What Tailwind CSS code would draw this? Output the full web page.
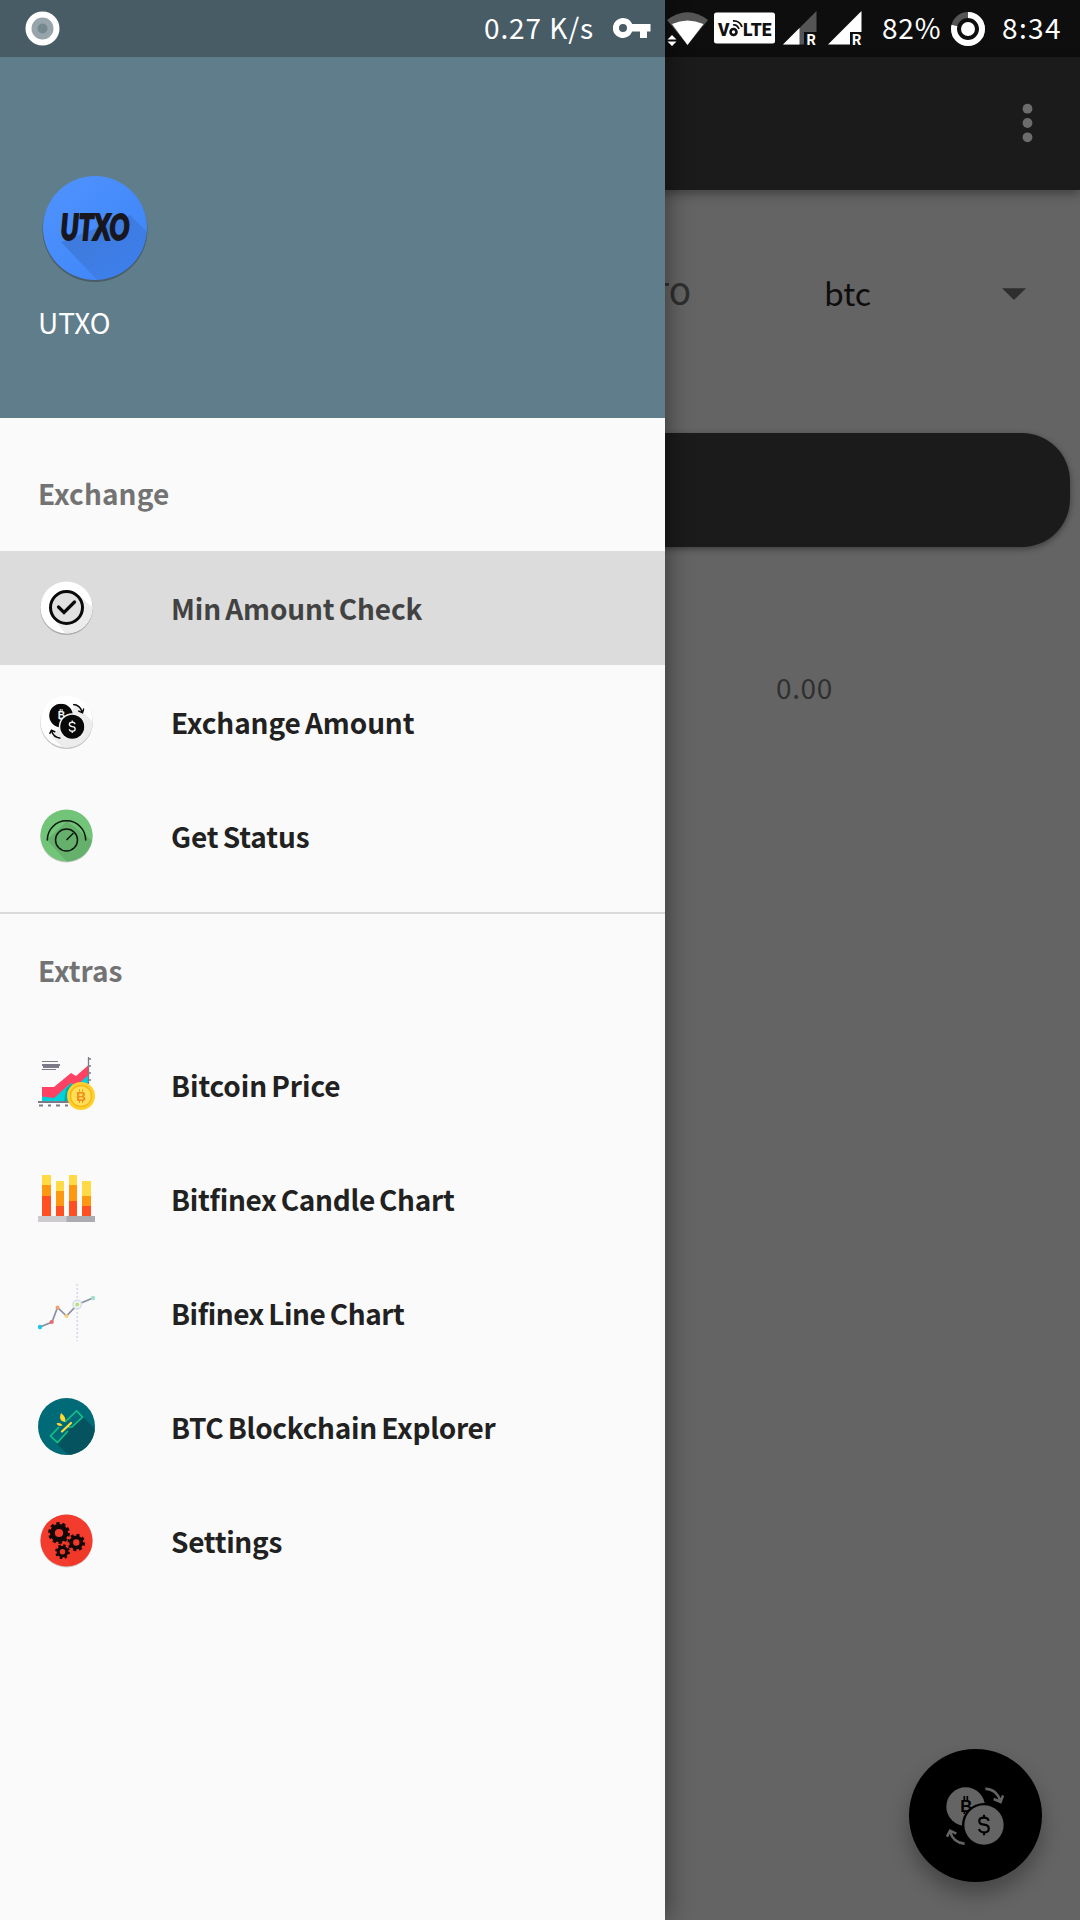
<!DOCTYPE html>
<html lang="en">
<head>
<meta charset="utf-8">
<title>UTXO</title>
<script src="https://cdn.jsdelivr.net/npm/@tailwindcss/browser@4"></script>
</head>
<body class="relative h-[1920px] w-[1080px] overflow-hidden bg-[#646464] font-['Noto_Sans_CJK_SC',sans-serif] text-[28px]">

<svg class="absolute size-0">
  <defs>
    <!-- two coins with exchange arrows -->
    <symbol id="swap" viewBox="200 169 174 174">
      <circle cx="259" cy="228" r="58" fill="currentColor"/>
      <text x="261" y="245" text-anchor="middle" font-family="Liberation Sans" font-weight="bold" font-size="50" class="fill-(--gap)">B</text>
      <path d="M255 196v16M264 196v16M255 242v8M264 242v8" class="stroke-(--gap)" stroke-width="5"/>
      <circle cx="314" cy="283" r="66" class="fill-(--gap)"/>
      <circle cx="314" cy="283" r="59" fill="currentColor"/>
      <path d="M328 270c-2-8-8-9-14-9-19 0-19 20 0 21 19 1 19 23 0 23-8 0-13-3-15-10M314 252v9M314 305v9" fill="none" class="stroke-(--gap)" stroke-width="6.500"/>
      <path d="M318 174c24 1 38 14 45 37M343 205l21 9 7-20M256 339c-24-2-38-15-44-37M203 318l9-18 19 9" fill="none" stroke="currentColor" stroke-width="7.500"/>
    </symbol>
    <linearGradient id="fade" x1="0" y1="0" x2="1" y2="1"><stop offset=".3" stop-color="#000" stop-opacity=".12"/><stop offset="1" stop-color="#000" stop-opacity=".02"/></linearGradient>
    <linearGradient id="blue" x1="0" y1="0" x2="1" y2="1"><stop offset="0" stop-color="#5094ff"/><stop offset="1" stop-color="#3d83f7"/></linearGradient>
    <clipPath id="disc"><circle cx="28.500" cy="28.500" r="26"/></clipPath>
    <clipPath id="disc-full"><circle cx="28.500" cy="28.500" r="28.500"/></clipPath>
    <clipPath id="logo-disc"><circle cx="57" cy="57" r="52"/></clipPath>
  </defs>
</svg>

<!-- dimmed app screen -->
<main class="flex h-full flex-col">
  <div class="h-[57px] bg-[#0e0e0e]"></div>
  <header class="flex h-[133px] items-center justify-end bg-[#1b1b1b] pr-[47px] pb-px shadow-[0_4px_10px_rgba(0,0,0,.35)]">
    <svg class="h-10 w-[11px] fill-[#6c6c6c]" viewBox="0 0 11 40"><circle cx="5.500" cy="5.700" r="4.900"/><circle cx="5.500" cy="20" r="4.900"/><circle cx="5.500" cy="34.300" r="4.900"/></svg>
  </header>
  <section class="flex h-[243px] items-start pt-[72px] pl-[652px]">
    <div class="w-[172px] text-[29px] leading-[60px] font-medium text-[#2f2f2f]">TO</div>
    <div class="w-[178px] text-[32px] leading-[60px] text-[#0d0d0d]">btc</div>
    <svg class="mt-[26px] h-3 w-6 fill-[#2e2e2e]" viewBox="0 0 24 12"><path d="M0 .3h24L12 12z"/></svg>
  </section>
  <div class="mr-[10px] ml-[10px] h-[114px] rounded-[48px] bg-[#1b1b1b] shadow-[0_2px_6px_rgba(0,0,0,.4)]"></div>
  <div class="pt-[118px] pl-[776px] leading-[44px] tracking-[.6px] text-[#303030]">0.00</div>
</main>
<button class="absolute top-[1749px] left-[909px] size-[133px] rounded-full bg-black p-[37px] text-[#646464] shadow-[0_12px_20px_rgba(0,0,0,.3)] [--gap:#000]">
  <svg class="size-[58px]"><use href="#swap"/></svg>
</button>

<!-- navigation drawer -->
<aside class="absolute inset-y-0 left-0 flex w-[665px] flex-col bg-[#fafafa] shadow-[2px_0_24px_rgba(0,0,0,.42)]">
  <div class="flex h-[418px] flex-col bg-[#607d8b] pt-[171px] pl-[38px] text-white">
    <svg class="h-[114px] w-[114px]" viewBox="0 0 114 114">
      <circle cx="57" cy="58.500" r="52.500" fill="#000" opacity=".25"/>
      <g clip-path="url(#logo-disc)"><rect width="114" height="114" fill="url(#blue)"/><path d="M23 71L92 44L114 66V114H64z" fill="url(#fade)"/></g>
      <text x="57" y="69" text-anchor="middle" textLength="69" lengthAdjust="spacingAndGlyphs" font-family="Lato" font-weight="900" font-style="italic" font-size="36" fill="#17171d" stroke="#17171d" stroke-width="1.800">UTXO</text>
    </svg>
    <div class="mt-[13px] leading-[48px]">UTXO</div>
  </div>

  <h2 class="mt-[21px] h-[112px] pl-[38px] leading-[109px] font-bold tracking-[.1px] text-[#737373]">Exchange</h2>
  <nav class="font-bold text-[#212121]">
    <a class="flex h-[114px] items-center gap-[76px] bg-[#dcdcdc] pl-[38px] text-[#424242]">
      <svg class="-mt-[2px] size-[57px]" viewBox="0 0 57 57"><circle cx="28.500" cy="29.600" r="26.300" fill="#000" opacity=".22"/><circle cx="28.500" cy="28.500" r="26" fill="#fff"/><path d="M17 41L41 16L57 31V57H29z" fill="#ececec" clip-path="url(#disc)"/><circle cx="28.500" cy="28.500" r="16" fill="#e1e1e1" stroke="#0a0a0a" stroke-width="3"/><path d="M20.500 28l5.500 5.500L36.500 23" fill="none" stroke="#0a0a0a" stroke-width="3.200" stroke-linecap="round"/></svg>
      <span class="-mt-px tracking-[-.12px] [word-spacing:-2px]">Min Amount Check</span>
    </a>
    <a class="flex h-[114px] items-center gap-[76px] pl-[38px]">
      <svg class="-mt-[2px] size-[57px] text-[#080808] [--gap:#f4f4f4]" viewBox="0 0 57 57"><circle cx="28.500" cy="29.600" r="26.300" fill="#000" opacity=".22"/><circle cx="28.500" cy="28.500" r="26" fill="#fff"/><path d="M14 44L38 12L57 31V57H27z" fill="#ececec" clip-path="url(#disc)"/><use href="#swap" x="11" y="10.500" width="35.500" height="35.500"/></svg>
      <span class="-mt-px tracking-[-.1px] [word-spacing:-2px]">Exchange Amount</span>
    </a>
    <a class="flex h-[114px] items-center gap-[76px] pl-[38px]">
      <svg class="-mt-[2px] size-[57px]" viewBox="0 0 57 57"><circle cx="28.500" cy="29.300" r="26.300" fill="#000" opacity=".2"/><circle cx="28.500" cy="28.500" r="26" fill="#71c478"/><path d="M9 33L29 14L57 36V57H31z" fill="#65b16b" clip-path="url(#disc)"/><g fill="none" stroke="#0c150d" stroke-width="1.500"><path d="M9.300 33a19.200 19.200 0 0 1 38.400 0" stroke-linecap="round"/><circle cx="28.500" cy="33" r="11"/><path d="M28.500 33l7-7"/></g></svg>
      <span class="-mt-px tracking-[-.1px] [word-spacing:-2px]">Get Status</span>
    </a>
  </nav>

  <h2 class="mt-[19px] h-[116px] border-t-2 border-[#dadada] pl-[38px] leading-[113px] font-bold text-[#737373]">Extras</h2>
  <nav class="font-bold text-[#212121]">
    <a class="flex h-[114px] items-center gap-[76px] pl-[38px]">
      <svg class="size-[57px]" viewBox="0 0 57 57"><g stroke="#7b7a86" fill="none"><path d="M4 4.500h16M4 12.500h14" stroke-width="1"/><path d="M4 8h18M5 10h16" stroke-width="2.200"/></g><path d="M4 36l11-1L33 24l17-9v30H4z" fill="#00d2da"/><path d="M4 30h12l17-14 5 3L50 8.500v10L38 29l-5-3-17 15-12-1.500z" fill="#ff4163"/><path d="M28 32l5-5 5 3v15H26z" fill="#00acb2"/><path d="M50.500 0v27M50 2h3M50 9h3M50 16h3M50 23h3" stroke="#7b7a86" stroke-width="1.300"/><path d="M0 45h31" stroke="#7b7a86" stroke-width="2"/><path d="M1 48.500h4M10 48.500h3M18 48.500h4M27 48.500h3" stroke="#7b7a86" stroke-width="2"/><circle cx="43" cy="39" r="14" fill="#ffd02b"/><circle cx="43" cy="39" r="10.500" fill="#ffe057" stroke="#f9b51a" stroke-width="1.300"/><text x="43.200" y="44" text-anchor="middle" font-family="Liberation Sans" font-weight="bold" font-size="13.500" fill="#f28a1c">B</text><path d="M41.500 32.500v2M44.500 32.500v2M41.500 44v2M44.500 44v2" stroke="#f28a1c"/></svg>
      <span class="-mt-px tracking-[-.1px] [word-spacing:-2px]">Bitcoin Price</span>
    </a>
    <a class="flex h-[114px] items-center gap-[76px] pl-[38px]">
      <svg class="-mt-[2px] size-[57px]" viewBox="0 0 57 57"><path d="M4 5h9v11H4zM18 11h8v11h-8zM31 5h8v11h-8zM44 11h9v15h-9z" fill="#ffda44"/><path d="M4 15h9v12H4zM18 21h8v16h-8zM31 15h8v17h-8zM44 26h9v11h-9z" fill="#ff9811"/><path d="M4 26h9v20H4zM18 36h8v10h-8zM31 31h8v15h-8zM44 36h9v10h-9z" fill="#ff5023"/><path d="M0 46h29v6H0z" fill="#cdcbce"/><path d="M28.500 46H57v6H28.500z" fill="#acabb1"/></svg>
      <span class="-mt-px tracking-[-.28px] [word-spacing:-2px]">Bitfinex Candle Chart</span>
    </a>
    <a class="flex h-[114px] items-center gap-[76px] pl-[38px]">
      <svg class="-mt-[2px] size-[57px]" viewBox="0 0 57 57"><path d="M39.200 0v57" stroke="#d5dcec" stroke-width="1.800" stroke-dasharray="2 2"/><path d="M2 43l12-5 5.500-14.500L28.500 32l11-11.500L55 14" fill="none" stroke="#8b90a5" stroke-width="1.700"/><circle cx="2" cy="43" r="2.200" fill="#21c4ee"/><circle cx="13.700" cy="38" r="2.100" fill="#f0686d"/><circle cx="19.500" cy="23.500" r="2" fill="#f2a06c"/><circle cx="28.500" cy="32" r="2" fill="#f8cf78"/><circle cx="39.200" cy="20.500" r="4.200" fill="#f5f8f4" stroke="#d5dcec" stroke-width="1.500"/><circle cx="39.200" cy="20.500" r="2" fill="#b9de7f"/><circle cx="55" cy="14" r="2.200" fill="#9fe0cf"/></svg>
      <span class="-mt-px tracking-[-.45px] [word-spacing:-1.500px]">Bifinex Line Chart</span>
    </a>
    <a class="flex h-[114px] items-center gap-[76px] pl-[38px]">
      <svg class="-mt-[2px] size-[57px]" viewBox="0 0 57 57"><g clip-path="url(#disc-full)"><path d="M0 0h57v57H0z" fill="#006a76"/><path d="M18 45L44 18L62 36V62H36z" fill="#04535f"/></g><g fill="none" stroke="#14bf86" stroke-width="1.700"><path d="M21 29l-8.500 9 7 6.500L30 33M27 24L38.500 13l6 6L34 29h-4"/></g><path d="M24 33.500l9-8.500" stroke="#ffdc38" stroke-width="2.200" stroke-linecap="round"/><path d="M23 15c4 3 5 6 4 9-5-1-6-4-4-9zM18.500 25.500c3-1 5 0 6 2-3 1-5 0-6-2z" fill="#ffd92e"/></svg>
      <span class="-mt-px tracking-[-.3px] [word-spacing:-1.500px]">BTC Blockchain Explorer</span>
    </a>
    <a class="flex h-[114px] items-center gap-[76px] pl-[38px]">
      <svg class="-mt-[2px] size-[57px]" viewBox="0 0 57 57"><circle cx="28.500" cy="29" r="26.400" fill="#000" opacity=".18"/><circle cx="28.500" cy="28.500" r="26" fill="#f43c2e"/><path d="M12 30L45 26L57 38V57H38z" fill="#e8301f" opacity=".35" clip-path="url(#disc)"/>
        <g fill="none" stroke="#140909"><circle cx="21" cy="21" r="6.600" stroke-width="5"/><circle cx="21" cy="21" r="9.600" stroke-width="2.600" stroke-dasharray="3.350 2.680"/><circle cx="38.300" cy="30.500" r="5.100" stroke-width="3.800"/><circle cx="38.300" cy="30.500" r="7.600" stroke-width="2.400" stroke-dasharray="3 2.970"/><circle cx="24.500" cy="39.700" r="4.300" stroke-width="3.200"/><circle cx="24.500" cy="39.700" r="6.300" stroke-width="2.200" stroke-dasharray="2.500 2.450"/></g></svg>
      <span class="-mt-px tracking-[-.3px]">Settings</span>
    </a>
  </nav>
</aside>

<!-- system status bar -->
<div class="absolute top-0 left-0 flex h-[57px] w-full items-center text-white">
  <div class="flex h-full w-[665px] items-center bg-[#485c66] pl-[25px]">
    <svg class="size-[35px]" viewBox="0 0 35 35"><circle cx="17.500" cy="17.500" r="14" fill="#98a4ab" stroke="#fff" stroke-width="6"/><circle cx="17.500" cy="17.500" r="5" fill="#758991"/></svg>
    <span class="-mt-[3px] ml-[424px] w-[129px] whitespace-nowrap tracking-[.9px]">0.27 K/s</span>
    <svg class="-mt-px h-5 w-[38px] fill-white" viewBox="0 0 38 20"><path fill-rule="evenodd" d="M10 0a10 10 0 0 1 9.200 6H37.500v7.500H34V20H27v-6.500h-7.800A10 10 0 1 1 10 0zM10 6a4 4 0 1 0 0 8a4 4 0 0 0 0-8z"/></svg>
  </div>
  <svg class="h-[57px] w-[217px]" viewBox="665 0 217 57">
    <path d="M667 20Q687.500 4.500 708 20L687.500 45z" fill="#555"/>
    <path d="M672 24Q687.500 17 703.500 24L687.500 45z" fill="#fff"/>
    <path d="M667.500 39.500l4.500-4.500 4.500 4.500zM667.500 41.500l4.500 4.500 4.500-4.500z" fill="#fff"/>
    <rect x="714" y="12.500" width="61" height="31" rx="2.500" fill="#fff"/>
    <g fill="#111" font-family="Roboto" font-weight="900" font-size="18.500"><text x="718" y="35.500" textLength="11.500" lengthAdjust="spacingAndGlyphs">V</text><text x="743" y="35.500" textLength="28.500" lengthAdjust="spacingAndGlyphs">LTE</text></g>
    <circle cx="733.500" cy="32" r="3" fill="none" stroke="#111" stroke-width="2.600"/>
    <path d="M733 25q4-1 6 4M733 21q6.500-.500 9 6" fill="none" stroke="#111" stroke-width="1.800"/>
    <path d="M783 44.500L816.500 11V32H804V44.500z" fill="#555"/><path d="M783 44.500L799.500 28V44.500z" fill="#fff"/>
    <path d="M828 44.500L861.500 11V32H850V44.500z" fill="#fff"/>
    <g fill="#fff" font-family="Roboto" font-weight="700" font-size="14.500"><text x="806.500" y="44.500">R</text><text x="852" y="44.500">R</text></g>
  </svg>
  <span class="-mt-[3px] w-[69px] tracking-[.8px]">82%</span>
  <svg class="size-[34px]" viewBox="0 0 34 34"><circle cx="17" cy="17" r="14" fill="none" stroke="#555" stroke-width="6"/><circle cx="17" cy="17" r="14" fill="none" stroke="#fff" stroke-width="6" pathLength="100" stroke-dasharray="79 21" transform="rotate(-90 17 17)"/><circle cx="17" cy="17" r="7" fill="#fff"/></svg>
  <span class="-mt-[3px] ml-[17px] tracking-[1.400px]">8:34</span>
</div>
</body>
</html>
